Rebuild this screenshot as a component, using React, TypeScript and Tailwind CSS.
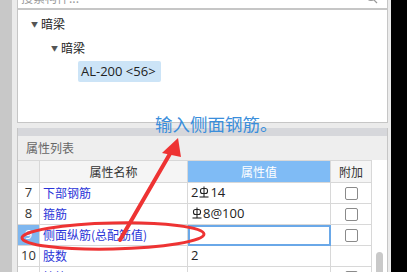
import React from 'react';

const cjk = { fontFamily: '"Noto Sans CJK SC", "Noto Sans", sans-serif' };
const latin = { fontFamily: '"Open Sans", "Noto Sans", sans-serif' };

function Rebar() {
  return (
    <svg width="10" height="12" viewBox="0 0 10 12" className="inline-block mx-[1px] -mt-[2px] align-middle">
      <rect x="1.5" y="2.5" width="7" height="5" rx="2" fill="none" stroke="#222" strokeWidth="1.1" />
      <line x1="5" y1="0.5" x2="5" y2="11" stroke="#222" strokeWidth="1.1" />
      <line x1="0.5" y1="11" x2="9.5" y2="11" stroke="#222" strokeWidth="1.1" />
    </svg>
  );
}

function Checkbox() {
  return <div className="w-[13px] h-[13px] border border-[#8a8a8a] rounded-[2px] bg-white" />;
}

type Row = { no: string; name: string; value: React.ReactNode; check: boolean; selected?: boolean };

const rows: Row[] = [
  { no: '7', name: '下部钢筋', value: <>2<Rebar />14</>, check: true },
  { no: '8', name: '箍筋', value: <><Rebar />8@100</>, check: true },
  { no: '9', name: '侧面纵筋(总配筋值)', value: '', check: true, selected: true },
  { no: '10', name: '肢数', value: '2', check: false },
  { no: '11', name: '拉筋', value: '', check: true },
];

export default function App() {
  return (
    <div className="relative w-[407px] h-[272px] overflow-hidden flex bg-black" style={cjk}>
      <div className="w-[12px] bg-[#c8c8c8]" />
      <div className="w-[379px] bg-[#ebebeb] pl-[5px] pr-[3px] flex flex-col overflow-hidden">
        {/* search box */}
        <div className="shrink-0 h-[9px] overflow-hidden bg-white border-x border-b border-[#c6c6c6] relative">
          <div className="h-[22px] -mt-[13px] flex items-center justify-between px-[3px] text-[12px] text-[#9a9a9a]">
            <span>搜索构件...</span>
            <svg width="12" height="12" viewBox="0 0 12 12" className="mr-[6px]">
              <circle cx="5" cy="5" r="3.5" fill="none" stroke="#999" strokeWidth="1.2" />
              <line x1="7.5" y1="7.5" x2="11" y2="11" stroke="#999" strokeWidth="1.2" />
            </svg>
          </div>
        </div>

        {/* tree */}
        <div className="shrink-0 h-[114px] bg-white border border-[#c6c6c6] text-[12px] text-[#222]">
          <div className="flex items-center h-[16px] mt-[6px] pl-[13px]">
            <span className="text-[7px] text-[#555] w-[10px]">▼</span>
            <span>暗梁</span>
          </div>
          <div className="flex items-center h-[16px] mt-[8px] pl-[33px]">
            <span className="text-[7px] text-[#555] w-[10px]">▼</span>
            <span>暗梁</span>
          </div>
          <div className="ml-[60px] mt-[5px] w-[83px] h-[21px] bg-[#cce4f7] rounded-[2px] flex items-center pl-[3px] text-[13px] text-[#222]" style={latin}>
            AL-200 &lt;56&gt;
          </div>
        </div>

        <div className="shrink-0 h-[5px]" />

        {/* properties */}
        <div className="shrink-0 h-[160px] flex flex-col border-x border-[#c6c6c6]">
          <div className="shrink-0 h-[8px] bg-[#d6d7db]" />
          <div className="shrink-0 h-[24px] bg-[#eeeeee] flex items-center pl-[8px] text-[12px] text-[#666]">属性列表</div>
          <div className="shrink-0 flex h-[128px] bg-white">
            <div className="grid grid-cols-[22px_148px_143px_41px] auto-rows-[21px] grid-rows-[22px] text-[12px] border-t border-[#d8d8d8] content-start">
              <div className="bg-[#f0f0f0] border-r border-b border-[#d8d8d8]" />
              <div className="bg-[#f5f5f5] border-r border-b border-[#d8d8d8] flex items-center justify-center text-[#333]">属性名称</div>
              <div className="bg-[#7fbbf5] border-r border-b border-[#d8d8d8] flex items-center justify-center text-white">属性值</div>
              <div className="bg-[#f5f5f5] border-r border-b border-[#d8d8d8] flex items-center justify-center text-[#333]">附加</div>
              {rows.map((r) => (
                <React.Fragment key={r.no}>
                  <div
                    className={
                      r.selected
                        ? 'bg-[#7fb7ef] text-white border-r border-b border-[#d8d8d8] flex items-center justify-center text-[13px]'
                        : 'bg-white text-[#333] border-r border-b border-[#d8d8d8] flex items-center justify-center text-[13px]'
                    }
                    style={latin}
                  >
                    {r.no}
                  </div>
                  <div className="border-r border-b border-[#d8d8d8] flex items-center pl-[3px] text-[#2a34d8] whitespace-nowrap">{r.name}</div>
                  <div
                    className={
                      r.selected
                        ? 'border-2 border-[#6aa8e8] flex items-center pl-[2px]'
                        : 'border-r border-b border-[#d8d8d8] flex items-center pl-[3px] text-[13px] text-[#222]'
                    }
                    style={latin}
                  >
                    {r.value}
                  </div>
                  <div className="border-r border-b border-[#d8d8d8] flex items-center justify-center">
                    {r.check && <Checkbox />}
                  </div>
                </React.Fragment>
              ))}
            </div>
            <div className="flex-1 flex justify-center pt-[92px]">
              <div className="w-[7px] h-[40px] rounded-full bg-[#c9c9c9]" />
            </div>
          </div>
        </div>
      </div>
      <div className="w-[16px] bg-black" />

      {/* annotation overlay */}
      <div className="absolute left-[155px] top-[115px] text-[17.5px] leading-none text-[#3a8edb]" style={cjk}>
        输入侧面钢筋。
      </div>
      <svg className="absolute left-0 top-0 pointer-events-none" width="407" height="272" viewBox="0 0 407 272">
        <g transform="rotate(-1.2 113 236)">
          <ellipse cx="113" cy="236" rx="91" ry="13" fill="none" stroke="#ee3333" strokeWidth="3" />
        </g>
        <line x1="120" y1="240" x2="171" y2="152" stroke="#ee3333" strokeWidth="4" strokeLinecap="round" />
        <polygon points="178,138 162,153 181,157" fill="#ee3333" />
      </svg>
    </div>
  );
}
